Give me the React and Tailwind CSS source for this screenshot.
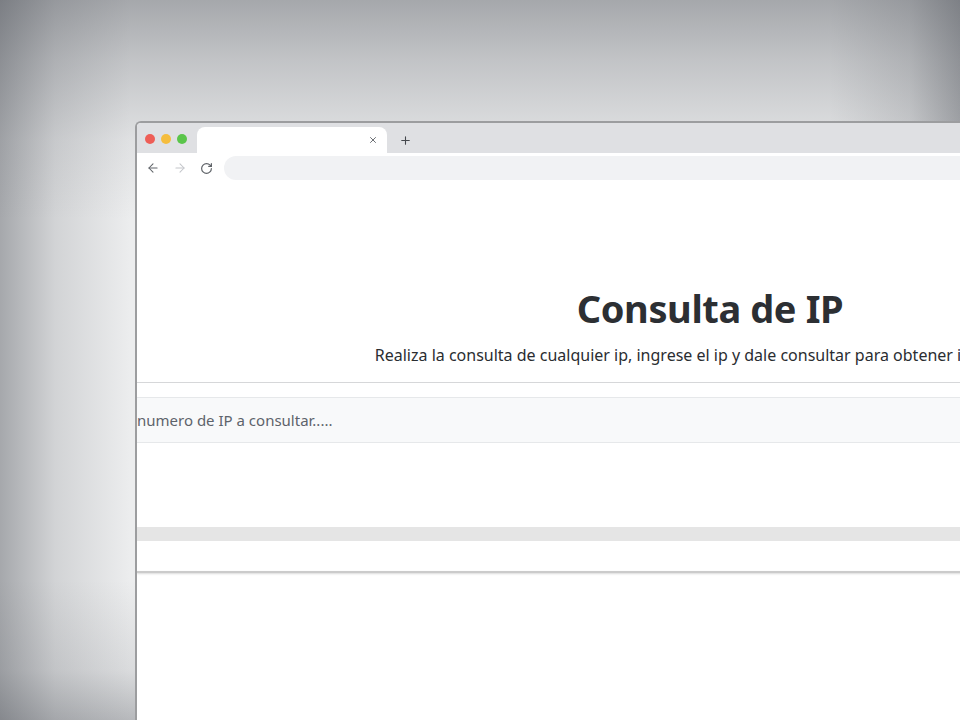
import React from 'react';
import { ArrowLeft, ArrowRight, RotateCw, X, Plus } from 'lucide-react';

export default function App() {
  return (
    <div
      className="w-[960px] h-[720px] overflow-hidden pt-[121px] pl-[135px] bg-[#ecedee] bg-[linear-gradient(to_bottom,rgba(60,64,72,0.4),rgba(60,64,72,0.24)_60px,rgba(60,64,72,0.07)_140px,rgba(60,64,72,0)_220px),linear-gradient(to_right,rgba(60,64,72,0.4),rgba(60,64,72,0.15)_55px,rgba(60,64,72,0)_130px),linear-gradient(to_left,rgba(60,64,72,0.38),rgba(60,64,72,0.14)_50px,rgba(60,64,72,0)_130px),linear-gradient(to_top,rgba(60,64,72,0.3),rgba(60,64,72,0.1)_50px,rgba(60,64,72,0)_140px)]"
      style={{ fontFamily: '"Noto Sans", "Open Sans", sans-serif' }}
    >
      <div className="w-[1148px] h-[640px] bg-white border-l-2 border-t-2 border-[#9c9d9f] rounded-tl-[6px] overflow-hidden">
        {/* tab strip */}
        <div className="h-[30px] bg-[#dfe0e3] flex items-end">
          <div className="flex items-center gap-[6px] pl-[8px] pr-[10px] self-center mt-[1px]">
            <span className="w-[10px] h-[10px] rounded-full bg-[#ee5e57]" />
            <span className="w-[10px] h-[10px] rounded-full bg-[#f5bd3e]" />
            <span className="w-[10px] h-[10px] rounded-full bg-[#5ac54a]" />
          </div>
          <div className="w-[190px] h-[26px] bg-white rounded-t-[8px] flex items-center justify-end pr-[9px]">
            <X className="w-[10px] h-[10px] text-[#5f6368]" strokeWidth={2.2} />
          </div>
          <div className="h-[26px] flex items-center pl-[12px]">
            <Plus className="w-[13px] h-[13px] text-[#45484d]" strokeWidth={2} />
          </div>
        </div>

        {/* toolbar */}
        <div className="h-[33px] flex items-center">
          <div className="flex items-center gap-[13px] pl-[9px] w-[87px] mb-[3px]">
            <ArrowLeft className="w-[14px] h-[14px] text-[#5f6368]" strokeWidth={1.8} />
            <ArrowRight className="w-[14px] h-[14px] text-[#c4c6ca]" strokeWidth={1.8} />
            <RotateCw className="w-[13px] h-[13px] text-[#5f6368]" strokeWidth={2.2} />
          </div>
          <div className="flex-1 h-[24px] rounded-full bg-[#f1f2f4] mb-[3px]" />
        </div>

        {/* page */}
        <div className="flex flex-col items-center pt-[99px]">
          <h1 className="text-[38px] leading-[46px] font-bold text-[#2c2f33] tracking-[-0.4px]">Consulta de IP</h1>
          <p className="mt-[12px] text-[16px] leading-[24px] text-[#2a2d31] whitespace-nowrap pl-[3px]">
            Realiza la consulta de cualquier ip, ingrese el ip y dale consultar para obtener información
          </p>
        </div>
        <div className="mt-[15px] border-t border-[#d6d7d9]" />
        <div className="mt-[14px] h-[46px] bg-[#f8f9fa] border-y border-[#e6e8ea] flex items-center">
          <span className="text-[15px] text-[#5d636b]">numero de IP a consultar.....</span>
        </div>
        <div className="h-[84px]" />
        <div className="h-[14px] bg-[#e5e5e5]" />
        <div className="h-[30px] bg-white" />
        <div className="h-[2px] bg-[#cbcbcb] shadow-[0_1px_2px_rgba(0,0,0,0.15)]" />
      </div>
    </div>
  );
}
